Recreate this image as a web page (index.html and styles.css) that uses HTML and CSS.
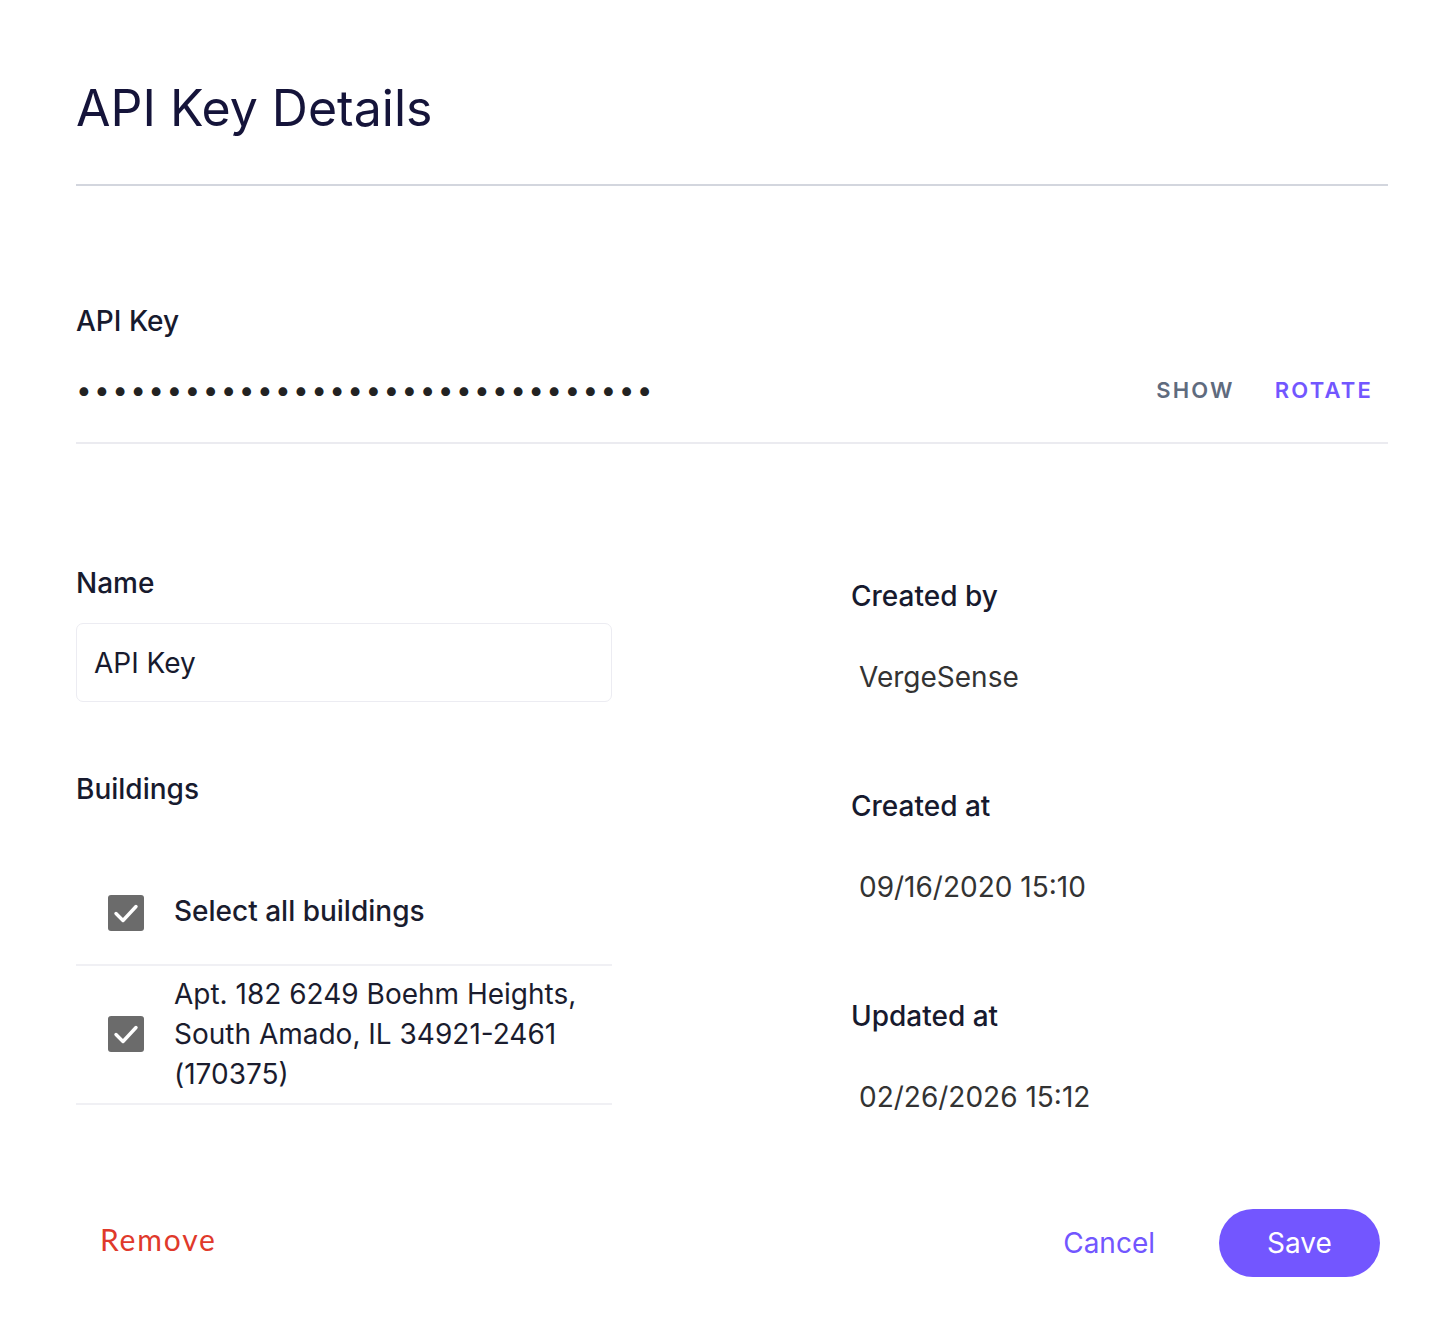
FILE: index.html
```html
<!DOCTYPE html>
<html lang="en">
<head>
    <meta charset="UTF-8">
    <meta name="viewport" content="width=device-width, initial-scale=1.0">
    <title>API Key Details</title>
    <link rel="stylesheet" href="styles.css">
</head>
<body>

    <div class="page">
        <header class="page-header">
            <h1>API Key Details</h1>
        </header>

        <section class="key-section">
            <div class="label">API Key</div>
            <div class="key-row">
                <span class="key-mask">••••••••••••••••••••••••••••••••</span>
                <div class="key-actions">
                    <button class="link-btn show">SHOW</button>
                    <button class="link-btn rotate">ROTATE</button>
                </div>
            </div>
        </section>

        <section class="details">
            <div class="col-left">
                <div class="label">Name</div>
                <div class="text-input">API Key</div>

                <div class="label buildings-label">Buildings</div>
                <div class="building-row select-all">
                    <span class="checkbox">
                        <svg viewBox="0 0 36 36" width="36" height="36"><path d="M8 18.5 L15 25.5 L28 11.5" fill="none" stroke="#fff" stroke-width="3.4" stroke-linecap="round" stroke-linejoin="round"/></svg>
                    </span>
                    <span class="building-name strong">Select all buildings</span>
                </div>
                <div class="building-row">
                    <span class="checkbox">
                        <svg viewBox="0 0 36 36" width="36" height="36"><path d="M8 18.5 L15 25.5 L28 11.5" fill="none" stroke="#fff" stroke-width="3.4" stroke-linecap="round" stroke-linejoin="round"/></svg>
                    </span>
                    <span class="building-name">Apt. 182 6249 Boehm Heights, South Amado, IL 34921-2461 (170375)</span>
                </div>
            </div>

            <div class="col-right">
                <div class="meta">
                    <div class="label">Created by</div>
                    <div class="value">VergeSense</div>
                </div>
                <div class="meta">
                    <div class="label">Created at</div>
                    <div class="value">09/16/2020 15:10</div>
                </div>
                <div class="meta">
                    <div class="label">Updated at</div>
                    <div class="value">02/26/2026 15:12</div>
                </div>
            </div>
        </section>

        <footer class="page-footer">
            <button class="remove-btn">Remove</button>
            <div class="footer-actions">
                <button class="cancel-btn">Cancel</button>
                <button class="save-btn">Save</button>
            </div>
        </footer>
    </div>

</body>
</html>
```

FILE: styles.css
```css
body {
    margin: 0;
    background: #ffffff;
    color: #171a2e;
    font-family: Inter, "Noto Sans", Arial, sans-serif;
}

button {
    font-family: inherit;
    border: none;
    background: none;
    padding: 0;
    cursor: pointer;
}

.page {
    padding: 0 66px 0 76px;
}

.page-header {
    padding-top: 78px;
    padding-bottom: 46px;
    border-bottom: 2px solid #d3d6de;
}

.page-header h1 {
    margin: 0;
    font-size: 50px;
    line-height: 60px;
    font-weight: 400;
    color: #15143a;
}

.label {
    font-size: 28px;
    line-height: 32px;
    font-weight: 500;
    color: #171a2e;
}

.key-section {
    padding-top: 119px;
    border-bottom: 2px solid #ebebf0;
}

.key-row {
    display: flex;
    justify-content: space-between;
    align-items: center;
    height: 40px;
    margin-top: 33px;
    margin-bottom: 32px;
}

.key-mask {
    font-size: 28px;
    letter-spacing: 2.34px;
    color: #222222;
}

.key-actions {
    display: flex;
    gap: 40px;
    padding-right: 15px;
}

.link-btn {
    font-size: 22px;
    font-weight: 600;
    letter-spacing: 2.2px;
}

.link-btn.show {
    color: #5f6b7e;
}

.link-btn.rotate {
    color: #7256ff;
}

.details {
    display: grid;
    grid-template-columns: 536px 1fr;
    column-gap: 239px;
    padding-top: 123px;
}

.text-input {
    margin-top: 24px;
    height: 79px;
    box-sizing: border-box;
    border: 1.5px solid #ececf2;
    border-radius: 7px;
    padding-left: 17px;
    display: flex;
    align-items: center;
    font-size: 28px;
    color: #171a2e;
}

.buildings-label {
    margin-top: 71px;
}

.building-row {
    display: flex;
    align-items: center;
    gap: 30px;
    padding: 8px 0 9px 32px;
    border-bottom: 2px solid #f0f0f4;
}

.building-row.select-all {
    margin-top: 86px;
    padding-top: 0;
    padding-bottom: 33px;
}

.checkbox {
    flex: none;
    width: 36px;
    height: 36px;
    border-radius: 3px;
    background: #6b6b6b;
    display: flex;
}

.select-all .checkbox {
    margin-top: 4px;
}

.building-name {
    font-size: 28px;
    line-height: 40px;
    color: #1a1c2e;
    padding-right: 20px;
}

.building-name.strong {
    font-weight: 500;
}

.col-right {
    padding-top: 13px;
}

.meta {
    margin-bottom: 97px;
}

.meta:last-child {
    margin-bottom: 0;
}

.value {
    margin-top: 49px;
    padding-left: 8px;
    font-size: 28px;
    line-height: 32px;
    color: #333333;
}

.page-footer {
    display: flex;
    justify-content: space-between;
    align-items: center;
    margin-top: 96px;
    padding: 0 8px 0 24px;
}

.remove-btn {
    font-family: Lato, Inter, sans-serif;
    font-size: 30px;
    letter-spacing: 1.8px;
    color: #e0392b;
    margin-top: -9px;
}

.footer-actions {
    display: flex;
    align-items: center;
    gap: 64px;
}

.cancel-btn {
    font-size: 28px;
    color: #7256ff;
}

.save-btn {
    height: 68px;
    width: 161px;
    border-radius: 34px;
    background: #7356ff;
    color: #ffffff;
    font-size: 28px;
}
```
